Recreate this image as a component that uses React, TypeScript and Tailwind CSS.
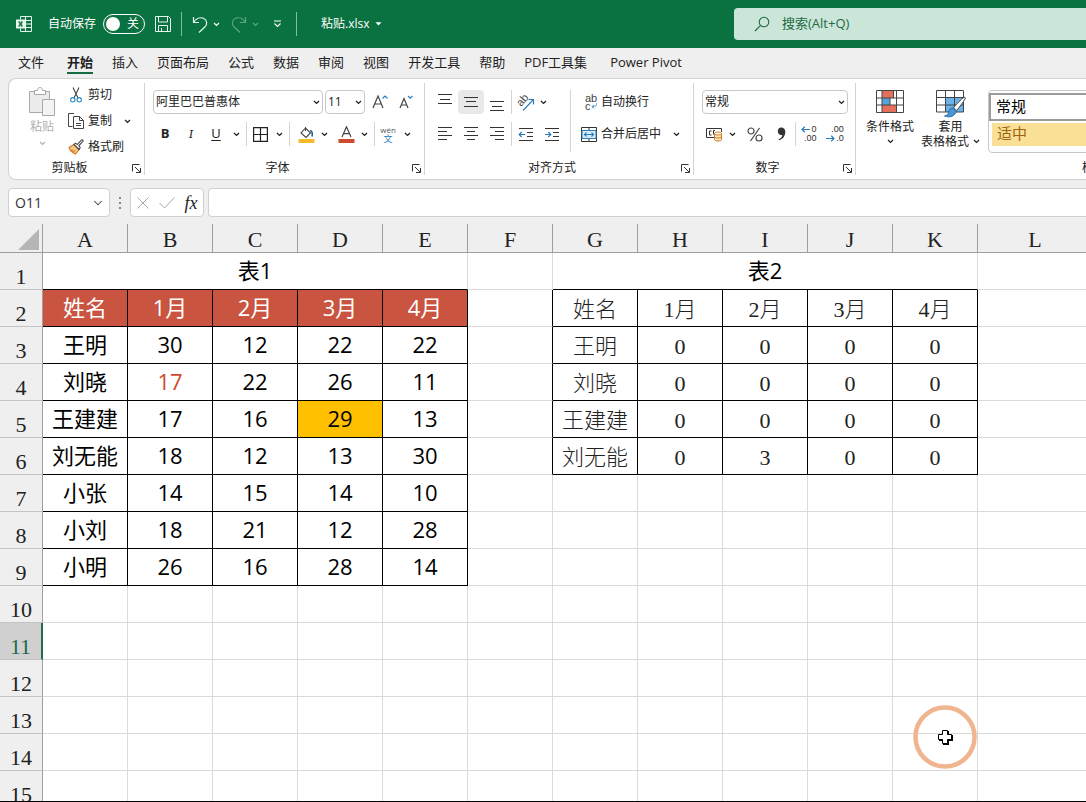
import React from "react";
import clsx from "clsx";
import { ChevronDown } from "lucide-react";

const columns = ["A", "B", "C", "D", "E", "F", "G", "H", "I", "J", "K", "L"];

const table1 = [
  ["姓名", "1月", "2月", "3月", "4月"],
  ["王明", "30", "12", "22", "22"],
  ["刘晓", "17", "22", "26", "11"],
  ["王建建", "17", "16", "29", "13"],
  ["刘无能", "18", "12", "13", "30"],
  ["小张", "14", "15", "14", "10"],
  ["小刘", "18", "21", "12", "28"],
  ["小明", "26", "16", "28", "14"],
];

const table2 = [
  ["姓名", "1月", "2月", "3月", "4月"],
  ["王明", "0", "0", "0", "0"],
  ["刘晓", "0", "0", "0", "0"],
  ["王建建", "0", "0", "0", "0"],
  ["刘无能", "0", "3", "0", "0"],
];

const tabs = ["文件", "开始", "插入", "页面布局", "公式", "数据", "审阅", "视图", "开发工具", "帮助", "PDF工具集", "Power Pivot"];

function Chevron({ className = "" }) {
  return (
    <svg className={clsx("shrink-0", className)} width="7" height="5" viewBox="0 0 7 5" fill="none" stroke="currentColor" strokeWidth="1.2">
      <path d="M1 1l2.5 2.5L6 1" />
    </svg>
  );
}

function IconButton({ label, className = "w-[26px]", children }: { label: string; className?: string; children: React.ReactNode }) {
  return (
    <button type="button" aria-label={label} className={clsx("flex h-6 shrink-0 items-center justify-center rounded", className)}>
      {children}
    </button>
  );
}

function Separator({ className = "h-6" }) {
  return <div className={clsx("w-px shrink-0 bg-[#d4d4d4]", className)} />;
}

function Lines({ rows }: { rows: [number, number, number][] }) {
  return (
    <svg width="16" height="20" viewBox="0 0 16 20" stroke="#333" strokeWidth="1">
      {rows.map(([x1, x2, y]) => (
        <path key={y} d={`M${x1} ${y}.5H${x2}`} />
      ))}
    </svg>
  );
}

function RibbonGroup({ title, className, launcher = true, children }: { title: string; className: string; launcher?: boolean; children: React.ReactNode }) {
  return (
    <section aria-label={title} className={clsx("flex shrink-0 flex-col justify-between", className)}>
      <div className="pt-[11px]">{children}</div>
      <div className="flex h-[22px] items-center pr-[2px]">
        <span className="flex-1 text-center">{title}</span>
        {launcher ? (
          <button type="button" aria-label={`${title}设置`} className="flex h-[10px] w-3 items-end justify-center">
            <svg width="9" height="9" viewBox="0 0 9 9" fill="none" stroke="#333" strokeWidth="1">
              <path d="M.5 7.5V.5h7M3 3l5 5M8.500 4v4.500H4" />
            </svg>
          </button>
        ) : (
          <span className="w-3" />
        )}
      </div>
    </section>
  );
}

function Combo({ label, value, className }: { label: string; value: string; className: string }) {
  return (
    <div className={clsx("relative shrink-0", className)}>
      <select aria-label={label} className="block h-6 w-full appearance-none rounded border border-[#c8c8c8] bg-white pl-[2px] text-xs text-[#222]">
        <option>{value}</option>
      </select>
      <Chevron className="pointer-events-none absolute top-[10px] right-[3px]" />
    </div>
  );
}

function TitleBar() {
  return (
    <header className="flex h-12 shrink-0 items-center bg-[#0a7140] pl-4 text-xs text-white">
      <svg width="16" height="16" viewBox="0 0 16 16" fill="none" stroke="#e6f5ec" strokeWidth="1">
        <path d="M4.500 3.500v-3h11v15h-11v-3M9.500.5v15M9 4.500h6.500M9 8h6.500M9 11.500h6.500" />
        <rect x="0" y="3.500" width="9" height="9" fill="#e6f5ec" stroke="none" />
        <path d="M2.800 5.500l3.600 5M6.400 5.500l-3.600 5" stroke="#0a7140" strokeWidth="1.400" />
      </svg>
      <label htmlFor="autosave" className="ml-4">自动保存</label>
      <div className="relative ml-[7px] h-5 w-[42px]">
        <input
          id="autosave"
          type="checkbox"
          className="block h-5 w-[42px] appearance-none rounded-full border border-white before:mt-[2px] before:ml-[2px] before:block before:size-[14px] before:rounded-full before:bg-white"
        />
        <span className="pointer-events-none absolute top-0 right-[6px] leading-5">关</span>
      </div>
      <button type="button" aria-label="保存" className="ml-[10px]">
        <svg width="16" height="16" viewBox="0 0 16 16" fill="none" stroke="#e6f5ec" strokeWidth="1">
          <path d="M.5.5h13l2 2v13H.5zM3.500.5v5.500h9V.5M3.500 15.500V9.500h9v6M6.500 12v3.500" />
        </svg>
      </button>
      <div className="ml-[10px] h-6 w-px bg-[#7fbf9c]" />
      <button type="button" aria-label="撤消" className="ml-[10px] flex items-center gap-[5px]">
        <svg width="16" height="17" viewBox="0 0 16 17" fill="none" stroke="#e6f5ec" strokeWidth="1.200">
          <path d="M1.500 1v5.500H7M1.500 6.500C4 2.500 8 .8 11.500 2.300c4 2 4 6.200 1.300 8.700L7 16.500" />
        </svg>
        <Chevron />
      </button>
      <button type="button" aria-label="恢复" className="ml-[11px] flex items-center gap-[5px] text-[#5aa67d]">
        <svg width="16" height="17" viewBox="0 0 16 17" fill="none" stroke="currentColor" strokeWidth="1.200">
          <path d="M14.500 1v5.500H9M14.500 6.500C12 2.500 8 .8 4.500 2.300c-4 2-4 6.200-1.300 8.700L9 16.500" />
        </svg>
        <Chevron />
      </button>
      <button type="button" aria-label="自定义快速访问工具栏" className="ml-[14px]">
        <svg width="9" height="8" viewBox="0 0 9 8" fill="none" stroke="#fff" strokeWidth="1.100">
          <path d="M1 1h7M1.500 3.500l3 3 3-3" />
        </svg>
      </button>
      <div className="ml-[14px] h-6 w-px bg-[#7fbf9c]" />
      <button type="button" className="ml-6 flex items-center gap-[6px]">
        粘贴.xlsx
        <svg width="7" height="4" viewBox="0 0 7 4" fill="#fff">
          <path d="M.5.300h6L3.500 3.600z" />
        </svg>
      </button>
      <div className="ml-auto flex h-8 w-[352px] items-center rounded-l bg-[#cbe5d9] pl-5">
        <svg className="shrink-0" width="16" height="16" viewBox="0 0 16 16" fill="none" stroke="#1d6b43" strokeWidth="1.100">
          <circle cx="10" cy="6" r="4.800" />
          <path d="M6.600 9.400L1 15" />
        </svg>
        <input
          type="search"
          aria-label="搜索"
          placeholder="搜索(Alt+Q)"
          className="ml-3 w-full bg-transparent text-[13px] outline-none placeholder:text-[#1d6b43]"
        />
      </div>
    </header>
  );
}

function RibbonTabs() {
  return (
    <nav className="flex h-[30px] shrink-0 items-start gap-[19px] pl-[18px] text-[13px] text-[#222]">
      {tabs.map((tab, i) => (
        <a
          key={tab}
          href="#"
          className={clsx(
            "border-b-2 pt-1 leading-5 whitespace-nowrap",
            i === 1 ? "border-[#146c43] font-bold" : "border-transparent",
            i === 0 && "mr-1",
            tab === "Power Pivot" && "ml-1"
          )}
        >
          {tab}
        </a>
      ))}
    </nav>
  );
}

function Clipboard() {
  return (
    <RibbonGroup title="剪贴板" className="w-[135px]">
      <div className="-mt-1 flex h-[66px] items-start">
        <button type="button" className="ml-[19px] flex w-7 flex-col items-center text-[#b0b0b0]">
          <svg className="mt-px" width="28" height="30" viewBox="0 0 28 30" fill="#ececec" stroke="#a8a8a8" strokeWidth="1">
            <path d="M1.500 4.500h20v21h-20z" />
            <path d="M6.500 7.500v-4h3c0-4 5-4 5 0h3v4z" fill="#fff" />
            <path d="M14.500 12.500h12v16h-12z" fill="#f4f4f4" />
          </svg>
          <span className="leading-5">粘贴</span>
          <Chevron className="mt-1" />
        </button>
        <div className="-mt-1 ml-3 flex flex-col">
          <button type="button" className="flex h-[26px] items-center gap-1">
            <svg width="16" height="16" viewBox="0 0 16 16" fill="none" strokeWidth="1.100">
              <path d="M5 .5l5 10.500M11 .5L6 11" stroke="#444" />
              <circle cx="4.800" cy="12.800" r="2.200" stroke="#2b88c8" />
              <circle cx="11.200" cy="12.800" r="2.200" stroke="#2b88c8" />
            </svg>
            剪切
          </button>
          <button type="button" className="flex h-[26px] items-center gap-1">
            <svg width="16" height="16" viewBox="0 0 16 16" fill="none" stroke="#444" strokeWidth="1">
              <path d="M4.500 13.500h-4V.5h5.500M5.500 3.500h6l4 4v8h-10zM11.500 3.500v4h4M8 10.500h5M8 12.500h5" />
            </svg>
            复制
            <Chevron className="ml-2" />
          </button>
          <button type="button" className="flex h-[26px] items-center gap-1">
            <svg width="16" height="16" viewBox="0 0 16 16" fill="none" strokeWidth="1.100">
              <path d="M1 8.500l5-3 5 5-3.500 4.500C4 13.500 2 11.500 1 8.500z" fill="#f6c98b" stroke="#d07a1c" />
              <path d="M3 11l2 .2M5 13.200l2-2" stroke="#d07a1c" />
              <path d="M6 5.500l1.600-1.300 1.700 1.400L13.500 1c1-.8 2 .4 1.300 1.300l-4 4.500 1.400 1.700L11 10.500z" fill="#fff" stroke="#444" />
            </svg>
            格式刷
          </button>
        </div>
      </div>
    </RibbonGroup>
  );
}

function FontGroup() {
  return (
    <RibbonGroup title="字体" className="w-[279px]">
      <div className="flex items-center pl-2">
        <Combo label="字体" value="阿里巴巴普惠体" className="w-[170px]" />
        <Combo label="字号" value="11" className="ml-[2px] w-10" />
        <IconButton label="增大字号" className="ml-[2px] w-[26px]">
          <svg width="16" height="16" viewBox="0 0 16 16" fill="none" strokeWidth="1.200">
            <path d="M1 14L6 2l5 12M2.800 10h6.400" stroke="#444" />
            <path d="M10.500 4.500l2.500-2.500 2.500 2.500" stroke="#2b7cb8" />
          </svg>
        </IconButton>
        <IconButton label="减小字号">
          <svg width="14" height="16" viewBox="0 0 14 16" fill="none" strokeWidth="1.200">
            <path d="M1 14l4-9.500L9 14M2.400 11h5.200" stroke="#444" />
            <path d="M9 2l2.200 2.200L13.400 2" stroke="#2b7cb8" />
          </svg>
        </IconButton>
      </div>
      <div className="mt-2 flex items-center pl-[7px] text-[13px]">
        <IconButton label="加粗"><b>B</b></IconButton>
        <IconButton label="倾斜"><i className="font-serif">I</i></IconButton>
        <IconButton label="下划线" className="w-6"><span className="underline underline-offset-2">U</span></IconButton>
        <IconButton label="下划线样式" className="w-4"><Chevron /></IconButton>
        <Separator className="ml-[2px] h-6" />
        <IconButton label="边框">
          <svg width="15" height="15" viewBox="0 0 15 15" fill="none" stroke="#222" strokeWidth="1.200">
            <path d="M.6.600h13.800v13.800H.6zM7.500.6v13.800M.6 7.500h13.800" />
          </svg>
        </IconButton>
        <IconButton label="边框样式" className="w-3"><Chevron /></IconButton>
        <Separator className="ml-1 h-6" />
        <IconButton label="填充颜色" className="ml-1 w-6">
          <svg width="17" height="17" viewBox="0 0 17 17" fill="none" strokeWidth="1.100">
            <path d="M7.500 1v4M7.500 2L3 7l5 4.500L12.500 7z" stroke="#444" />
            <path d="M12 4.500c2 .5 2.800 2.500 2 6" stroke="#1f5f96" strokeWidth="1.600" />
            <path d="M.5 13h16v4H.5z" fill="#f5bb2c" />
          </svg>
        </IconButton>
        <IconButton label="填充选项" className="w-3"><Chevron /></IconButton>
        <IconButton label="字体颜色" className="ml-1 w-6">
          <svg width="17" height="17" viewBox="0 0 17 17" fill="none">
            <path d="M4 11L8.500.8 13 11M5.500 7.700h6" stroke="#444" strokeWidth="1.200" />
            <path d="M.5 13h16v4H.5z" fill="#cc4a2f" />
          </svg>
        </IconButton>
        <IconButton label="颜色选项" className="w-3"><Chevron /></IconButton>
        <Separator className="ml-1 h-6" />
        <IconButton label="拼音指南">
          <span className="flex flex-col items-center text-[8px] leading-[8px] text-[#555]">
            wén<span className="text-[9px] leading-[9px] text-[#2b7cb8]">文</span>
          </span>
        </IconButton>
        <IconButton label="拼音选项" className="w-3"><Chevron /></IconButton>
      </div>
    </RibbonGroup>
  );
}

function AlignGroup() {
  return (
    <RibbonGroup title="对齐方式" className="w-[268px]">
      <div className="flex pl-[7px]">
        <div>
          <div className="flex items-center">
            <IconButton label="顶端对齐"><Lines rows={[[1, 15, 2], [3, 13, 7], [1, 15, 11]]} /></IconButton>
            <IconButton label="垂直居中" className="w-[26px] bg-[#e9e9e9]"><Lines rows={[[1, 15, 5], [3, 13, 9], [1, 15, 14]]} /></IconButton>
            <IconButton label="底端对齐"><Lines rows={[[1, 15, 9], [3, 13, 14], [1, 15, 18]]} /></IconButton>
            <Separator className="mx-px h-6" />
            <IconButton label="方向" className="w-6">
              <svg className="overflow-visible" width="18" height="18" viewBox="0 0 18 18" fill="none" strokeWidth="1.100">
                <text x="0" y="0" fontSize="11" fontFamily="Liberation Sans" fill="#444" transform="translate(5 14) rotate(-48)">ab</text>
                <path d="M7 17.500L17 7M12.500 6.500H17.500V11.500" stroke="#2b7cb8" />
              </svg>
            </IconButton>
            <IconButton label="方向选项" className="w-3"><Chevron /></IconButton>
          </div>
          <div className="mt-2 flex items-center">
            <IconButton label="左对齐"><Lines rows={[[1, 15, 3], [1, 10, 7], [1, 15, 11], [1, 10, 15]]} /></IconButton>
            <IconButton label="居中"><Lines rows={[[1, 15, 3], [4, 12, 7], [1, 15, 11], [4, 12, 15]]} /></IconButton>
            <IconButton label="右对齐"><Lines rows={[[1, 15, 3], [6, 15, 7], [1, 15, 11], [6, 15, 15]]} /></IconButton>
            <Separator className="mx-px h-6" />
            <IconButton label="减少缩进量">
              <svg width="16" height="15" viewBox="0 0 16 15" fill="none">
                <path d="M1 1.500h14M9 5.500h6M9 9.500h6M1 13.500h14" stroke="#333" />
                <path d="M7 7.500H1.500M3.700 5L1.200 7.500l2.500 2.500" stroke="#2b7cb8" strokeWidth="1.200" />
              </svg>
            </IconButton>
            <IconButton label="增加缩进量">
              <svg width="16" height="15" viewBox="0 0 16 15" fill="none">
                <path d="M1 1.500h14M9 5.500h6M9 9.500h6M1 13.500h14" stroke="#333" />
                <path d="M1 7.500h5.500M4.300 5l2.500 2.500-2.500 2.500" stroke="#2b7cb8" strokeWidth="1.200" />
              </svg>
            </IconButton>
          </div>
        </div>
        <Separator className="ml-[5px] h-[62px]" />
        <div className="ml-[10px]">
          <button type="button" className="flex h-6 items-center gap-1">
            <span className="w-4 pl-1 text-left font-['Liberation_Sans',sans-serif] text-[11px] leading-[8px] text-[#444]">
              ab
              <span className="flex items-center">
                c
                <svg width="9" height="8" viewBox="0 0 9 8" fill="none" stroke="#2b7cb8" strokeWidth="1.200">
                  <path d="M8 0c.3 3.500-1.500 5-6.500 5M4 2.500L1.500 5 4 7.500" />
                </svg>
              </span>
            </span>
            自动换行
          </button>
          <button type="button" className="mt-2 flex h-6 items-center gap-1">
            <svg width="16" height="15" viewBox="0 0 16 15" fill="none">
              <path d="M.5.500h15v14H.5zM8 .5v3M8 11.500v3" stroke="#333" />
              <path d="M1 3.500h14v8H1z" fill="#d6ebf8" stroke="#2b7cb8" />
              <path d="M3.500 7.500h9M5.500 5.500l-2 2 2 2M10.500 5.500l2 2-2 2" stroke="#2b7cb8" strokeWidth="1.100" />
            </svg>
            合并后居中
            <Chevron className="ml-2" />
          </button>
        </div>
      </div>
    </RibbonGroup>
  );
}

function NumberGroup() {
  return (
    <RibbonGroup title="数字" className="w-[161px]">
      <div className="pl-2">
        <Combo label="数字格式" value="常规" className="w-[146px]" />
      </div>
      <div className="mt-2 flex items-center pl-2">
        <IconButton label="会计数字格式" className="w-6">
          <svg width="17" height="15" viewBox="0 0 17 15" fill="none">
            <path d="M8 10.500H.5v-9h15V5M5.500 4h-2v4h2M9 3.500H7.500v4" stroke="#333" />
            <path d="M8.500 6.500v6c0 2 7 2 7 0v-6" fill="#fbe3c0" stroke="#d07a1c" />
            <ellipse cx="12" cy="6.500" rx="3.500" ry="1.500" fill="#fff" stroke="#d07a1c" />
            <path d="M8.500 9.500c0 2 7 2 7 0" stroke="#d07a1c" />
          </svg>
        </IconButton>
        <IconButton label="会计格式选项" className="w-3"><Chevron /></IconButton>
        <IconButton label="百分比样式" className="ml-1 w-[26px]">
          <svg width="16" height="15" viewBox="0 0 16 15" fill="none" stroke="#444" strokeWidth="1.200">
            <circle cx="4" cy="4" r="3" />
            <circle cx="12" cy="11" r="3" />
            <path d="M12.500 1L3.500 14" />
          </svg>
        </IconButton>
        <IconButton label="千位分隔样式">
          <svg width="9" height="14" viewBox="0 0 9 14" fill="#333">
            <path d="M4.200.5C6.800.5 8.300 2.300 8.300 5c0 4-2.500 7-6.300 8.300l-.4-.9c2.300-1 3.600-2.500 3.800-4.300C2.600 8.600.800 6.800.800 4.300.800 2 2.200.500 4.200.500z" />
          </svg>
        </IconButton>
        <Separator className="ml-px h-6" />
        <IconButton label="增加小数位数">
          <span className="flex flex-col items-end font-['Liberation_Sans',sans-serif] text-[9px] leading-[9px] text-[#333]">
            <span className="flex items-center">
              <svg width="10" height="7" viewBox="0 0 10 7" fill="none" stroke="#2b7cb8" strokeWidth="1.200">
                <path d="M9 3.500H1M3.800.800L1 3.500l2.800 2.700" />
              </svg>
              0
            </span>
            <span>.00</span>
          </span>
        </IconButton>
        <IconButton label="减少小数位数">
          <span className="flex flex-col items-end font-['Liberation_Sans',sans-serif] text-[9px] leading-[9px] text-[#333]">
            <span>.00</span>
            <span className="flex items-center">
              <svg width="10" height="7" viewBox="0 0 10 7" fill="none" stroke="#2b7cb8" strokeWidth="1.200">
                <path d="M0 3.500h8M5.200.800L8 3.500 5.200 6.200" />
              </svg>
              .0
            </span>
          </span>
        </IconButton>
      </div>
    </RibbonGroup>
  );
}

function StylesGroup() {
  return (
    <RibbonGroup title="样式" className="w-[490px]" launcher={false}>
      <div className="flex items-start">
        <button type="button" className="ml-[10px] flex w-12 flex-col items-center">
          <svg width="28" height="23" viewBox="0 0 28 23" fill="none">
            <path d="M6 1h11v7H6z" fill="#e2705a" />
            <path d="M6 8h8v7H6z" fill="#5aa2dc" />
            <path d="M6 15h14v7H6z" fill="#e2705a" />
            <path d="M.5.500h27v22H.5zM.5 8h27M.5 15h27M6 .5v22M20.500.5v22M14 8v7M17.500 1v7" stroke="#444" />
          </svg>
          <span className="mt-1 leading-5 whitespace-nowrap">条件格式</span>
          <Chevron className="mt-[2px]" />
        </button>
        <button type="button" className="ml-[7px] flex flex-col items-center leading-[15px]">
          <svg width="30" height="29" viewBox="0 0 30 29" fill="none">
            <path d="M10 8h18v14H10z" fill="#6bb2e8" />
            <path d="M.5.500h27v21.500H.5zM.5 7.500h27M.5 15h27M9.500.5V22M18.500.5V22" stroke="#444" />
            <path d="M28.500 7c-4 2.500-9 8-11 11l3 2.500C23.500 17 27.500 12 29.500 8z" fill="#fff" stroke="#444" />
            <path d="M17 18c-3 0-4 2-4.500 4.500-.5 2-1.500 3-4 3.500 5 2 11 .5 11.800-5.500z" fill="#4a96d4" stroke="#2b6da8" />
          </svg>
          <span>套用</span>
          <span className="flex items-center gap-1 whitespace-nowrap">
            表格格式 <Chevron />
          </span>
        </button>
        <div className="ml-2 flex h-[63px] flex-1 flex-col rounded border border-[#c8c8c8] text-[15px]">
          <button type="button" className="mt-[2px] flex h-7 shrink-0 border-2 border-[#9a9a9a] pl-[5px] leading-[22px] text-black">常规</button>
          <button type="button" className="mt-[2px] ml-[3px] flex h-[23px] shrink-0 bg-[#fadf96] pl-[5px] leading-5 text-[#9c6410]">适中</button>
        </div>
      </div>
    </RibbonGroup>
  );
}

function FormulaBar() {
  return (
    <div className="mt-2 flex h-[29px] shrink-0 items-stretch pl-2">
      <div className="flex w-[102px] items-center rounded border border-[#d0d0d0] bg-white pr-1">
        <input aria-label="名称框" defaultValue="O11" className="w-full min-w-0 bg-transparent pl-[6px] text-sm text-[#333] outline-none" />
        <ChevronDown size={14} strokeWidth={1.8} className="shrink-0 text-[#444]" />
      </div>
      <div className="flex w-5 flex-col items-center justify-center gap-[3px]">
        <i className="size-[2px] bg-[#8a8a8a]" />
        <i className="size-[2px] bg-[#8a8a8a]" />
        <i className="size-[2px] bg-[#8a8a8a]" />
      </div>
      <div className="flex w-[74px] items-center rounded border border-[#d0d0d0] bg-white">
        <IconButton label="取消" className="w-6">
          <svg width="12" height="12" viewBox="0 0 12 12" stroke="#a8a8a8" fill="none"><path d="M.5.500l11 11M11.500.5l-11 11" /></svg>
        </IconButton>
        <IconButton label="输入" className="w-6">
          <svg width="16" height="12" viewBox="0 0 16 12" stroke="#a8a8a8" fill="none"><path d="M.5 6l5 5L15.500.5" /></svg>
        </IconButton>
        <IconButton label="插入函数" className="w-6">
          <span className="font-['Liberation_Serif',serif] text-lg leading-5 italic text-[#222]">fx</span>
        </IconButton>
      </div>
      <input aria-label="编辑栏" className="ml-1 min-w-0 flex-1 rounded-l border border-r-0 border-[#d0d0d0] bg-white px-2 text-sm outline-none" />
    </div>
  );
}

// cell borders: every cell draws its own right and bottom edge
function Cell({ row, col }: { row: number; col: number }) {
  const first = table1[row - 2]?.[col];
  const second = table2[row - 2]?.[col - 6];
  const inFirst = first !== undefined;
  const inSecond = second !== undefined;
  const filled = inFirst || inSecond;
  const red = row === 4 && col === 1;

  return (
    <td
      className={clsx(
        "border-r border-b p-0 text-center leading-8",
        filled ? "border-black" : "border-[#dadada]",
        col === 5 && row >= 2 && row <= 6 && "border-r-black",
        inFirst && "pb-[2px]",
        inFirst && row === 2 && "bg-[#c95440] text-white",
        inFirst && row > 2 && !red && "text-black",
        inSecond && "pt-1 font-['Liberation_Serif','Noto_Sans_CJK_SC',serif] font-light text-[#222]",
        red && "text-[#cf4a2c]",
        row === 5 && col === 3 && "bg-[#ffc000]"
      )}
    >
      {first ?? second}
    </td>
  );
}

function Sheet() {
  return (
    <div className="mt-[7px] min-h-0 flex-1 overflow-hidden border-b border-black">
      <table className="w-full min-w-[1093px] table-fixed border-separate border-spacing-0 bg-white text-[22px]">
        <colgroup>
          <col className="w-[43px]" />
          {columns.map((c) => (
            <col key={c} className={c === "L" ? "" : "w-[85px]"} />
          ))}
        </colgroup>
        <thead>
          <tr className="h-[29px] bg-[#efefef] font-['Liberation_Serif',serif]">
            <th className="border-r border-b border-[#9e9e9e] p-0" aria-label="全选">
              <svg className="mt-[2px] mr-[3px] ml-auto" width="21" height="21" viewBox="0 0 21 21" fill="#b5b5b5">
                <path d="M21 0v21H0z" />
              </svg>
            </th>
            {columns.map((c) => (
              <th key={c} scope="col" className="border-r border-b border-[#9e9e9e] p-0 pt-1 leading-6 font-normal text-[#222]">
                {c}
              </th>
            ))}
          </tr>
        </thead>
        <tbody>
          {Array.from({ length: 15 }, (_, i) => i + 1).map((row) => (
            <tr key={row} className="h-[37px]">
              <th
                scope="row"
                className={clsx(
                  "border-b border-b-[#c4c4c4] p-0 pt-3 font-['Liberation_Serif',serif] leading-6 font-normal",
                  row === 11 ? "border-r-2 border-r-[#1f7145] bg-[#d0d0d0] text-[#1f6b45]" : "border-r border-r-[#9e9e9e] bg-[#efefef] text-[#222]"
                )}
              >
                {row}
              </th>
              {row === 1 ? (
                <>
                  <td colSpan={5} className="border-r border-b border-r-[#dadada] border-b-black p-0 pb-[2px] text-center leading-8">表1</td>
                  <td className="border-r border-b border-[#dadada]" />
                  <td colSpan={5} className="border-r border-b border-r-[#dadada] border-b-black p-0 pb-[2px] text-center leading-8">表2</td>
                  <td className="border-r border-b border-[#dadada]" />
                </>
              ) : (
                columns.map((c, col) => <Cell key={c} row={row} col={col} />)
              )}
            </tr>
          ))}
        </tbody>
      </table>
    </div>
  );
}

export default function App() {
  return (
    <div className="relative flex h-screen flex-col overflow-hidden bg-[#efefef] font-['Open_Sans','Noto_Sans_CJK_SC',sans-serif]">
      <TitleBar />
      <RibbonTabs />
      <div className="ml-2 flex h-[102px] shrink-0 overflow-hidden rounded-l-lg border border-r-0 border-[#d2d2d2] bg-white text-xs text-[#222]">
        <Clipboard />
        <Separator className="mt-1 h-[92px]" />
        <FontGroup />
        <Separator className="mt-1 h-[92px]" />
        <AlignGroup />
        <Separator className="mt-1 h-[92px]" />
        <NumberGroup />
        <Separator className="mt-1 h-[92px]" />
        <StylesGroup />
      </div>
      <FormulaBar />
      <Sheet />

      {/* mouse pointer with click ring */}
      <svg className="pointer-events-none absolute top-[705px] left-[913px]" width="64" height="64" viewBox="0 0 64 64" fill="none">
        <circle cx="32" cy="32" r="29.500" stroke="#f0b48e" strokeWidth="4.500" />
        <path d="M30 26h6v4h4v6h-4v4h-6v-4h-4v-6h4z" fill="#000" />
        <path d="M29.500 25.500h5v4h4v5h-4v4h-5v-4h-4v-5h4z" fill="#fff" stroke="#000" />
      </svg>
    </div>
  );
}
